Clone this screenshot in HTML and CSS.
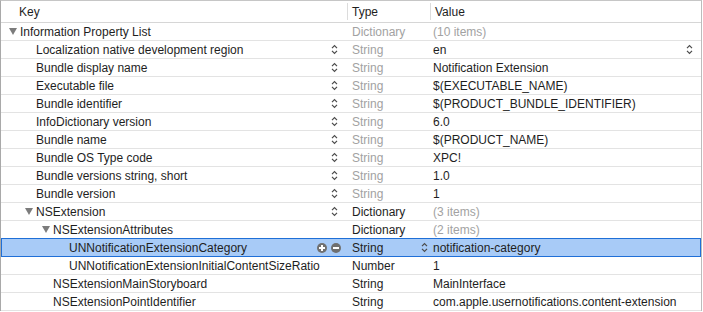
FILE: index.html
```html
<!DOCTYPE html>
<html lang="en">
<head>
    <meta charset="UTF-8">
    <title>Info.plist</title>
    <link rel="stylesheet" href="styles.css">
</head>
<body>

<div class="plist">
    <div class="head">
        <div class="key">Key</div>
        <div class="type">Type</div>
        <div class="value">Value</div>
    </div>

    <div class="row">
        <div class="key lvl0"><span class="tri"></span><span class="label">Information Property List</span></div>
        <div class="type dim">Dictionary</div>
        <div class="value dim">(10 items)</div>
    </div>
    <div class="row">
        <div class="key lvl1"><span class="label">Localization native development region</span><svg class="step" viewBox="0 0 7 11"><path d="M1 4.2L3.5 1.7L6 4.2M1 6.8L3.5 9.3L6 6.8"/></svg></div>
        <div class="type dim">String</div>
        <div class="value"><span class="label">en</span><svg class="step vstep" viewBox="0 0 7 11"><path d="M1 4.2L3.5 1.7L6 4.2M1 6.8L3.5 9.3L6 6.8"/></svg></div>
    </div>
    <div class="row">
        <div class="key lvl1"><span class="label">Bundle display name</span><svg class="step" viewBox="0 0 7 11"><path d="M1 4.2L3.5 1.7L6 4.2M1 6.8L3.5 9.3L6 6.8"/></svg></div>
        <div class="type dim">String</div>
        <div class="value">Notification Extension</div>
    </div>
    <div class="row">
        <div class="key lvl1"><span class="label">Executable file</span><svg class="step" viewBox="0 0 7 11"><path d="M1 4.2L3.5 1.7L6 4.2M1 6.8L3.5 9.3L6 6.8"/></svg></div>
        <div class="type dim">String</div>
        <div class="value">$(EXECUTABLE_NAME)</div>
    </div>
    <div class="row">
        <div class="key lvl1"><span class="label">Bundle identifier</span><svg class="step" viewBox="0 0 7 11"><path d="M1 4.2L3.5 1.7L6 4.2M1 6.8L3.5 9.3L6 6.8"/></svg></div>
        <div class="type dim">String</div>
        <div class="value">$(PRODUCT_BUNDLE_IDENTIFIER)</div>
    </div>
    <div class="row">
        <div class="key lvl1"><span class="label">InfoDictionary version</span><svg class="step" viewBox="0 0 7 11"><path d="M1 4.2L3.5 1.7L6 4.2M1 6.8L3.5 9.3L6 6.8"/></svg></div>
        <div class="type dim">String</div>
        <div class="value">6.0</div>
    </div>
    <div class="row">
        <div class="key lvl1"><span class="label">Bundle name</span><svg class="step" viewBox="0 0 7 11"><path d="M1 4.2L3.5 1.7L6 4.2M1 6.8L3.5 9.3L6 6.8"/></svg></div>
        <div class="type dim">String</div>
        <div class="value">$(PRODUCT_NAME)</div>
    </div>
    <div class="row">
        <div class="key lvl1"><span class="label">Bundle OS Type code</span><svg class="step" viewBox="0 0 7 11"><path d="M1 4.2L3.5 1.7L6 4.2M1 6.8L3.5 9.3L6 6.8"/></svg></div>
        <div class="type dim">String</div>
        <div class="value">XPC!</div>
    </div>
    <div class="row">
        <div class="key lvl1"><span class="label">Bundle versions string, short</span><svg class="step" viewBox="0 0 7 11"><path d="M1 4.2L3.5 1.7L6 4.2M1 6.8L3.5 9.3L6 6.8"/></svg></div>
        <div class="type dim">String</div>
        <div class="value">1.0</div>
    </div>
    <div class="row">
        <div class="key lvl1"><span class="label">Bundle version</span><svg class="step" viewBox="0 0 7 11"><path d="M1 4.2L3.5 1.7L6 4.2M1 6.8L3.5 9.3L6 6.8"/></svg></div>
        <div class="type dim">String</div>
        <div class="value">1</div>
    </div>
    <div class="row">
        <div class="key lvl1"><span class="tri"></span><span class="label">NSExtension</span><svg class="step" viewBox="0 0 7 11"><path d="M1 4.2L3.5 1.7L6 4.2M1 6.8L3.5 9.3L6 6.8"/></svg></div>
        <div class="type">Dictionary</div>
        <div class="value dim">(3 items)</div>
    </div>
    <div class="row">
        <div class="key lvl2"><span class="tri"></span><span class="label">NSExtensionAttributes</span></div>
        <div class="type">Dictionary</div>
        <div class="value dim">(2 items)</div>
    </div>
    <div class="row selected">
        <div class="key lvl3">
            <span class="label">UNNotificationExtensionCategory</span>
            <span class="btns"><span class="circ plus"></span><span class="circ minus"></span></span>
        </div>
        <div class="type"><span class="label">String</span><svg class="step tstep" viewBox="0 0 7 11"><path d="M1 4.2L3.5 1.7L6 4.2M1 6.8L3.5 9.3L6 6.8"/></svg></div>
        <div class="value">notification-category</div>
    </div>
    <div class="row">
        <div class="key lvl3"><span class="label">UNNotificationExtensionInitialContentSizeRatio</span></div>
        <div class="type">Number</div>
        <div class="value">1</div>
    </div>
    <div class="row">
        <div class="key lvl2"><span class="label">NSExtensionMainStoryboard</span></div>
        <div class="type">String</div>
        <div class="value">MainInterface</div>
    </div>
    <div class="row">
        <div class="key lvl2"><span class="label">NSExtensionPointIdentifier</span></div>
        <div class="type">String</div>
        <div class="value">com.apple.usernotifications.content-extension</div>
    </div>
</div>

</body>
</html>
```

FILE: styles.css
```css
body {
    margin: 0;
    font-family: "Liberation Sans", Arial, sans-serif;
    font-size: 12px;
    color: #1e1e1e;
    background: #fff;
}
.plist {
    width: 700px;
    border-top: 1px solid #c6c6c6;
    border-left: 1px solid #a9a9a9;
    border-right: 1px solid #bcbcbc;
}
.head,
.row {
    display: flex;
    align-items: center;
    border-bottom: 1px solid #e3e3e3;
}
.head {
    height: 21px;
    border-bottom-color: #d6d6d6;
}
.row {
    height: 17px;
}
.key {
    width: 346px;
    display: flex;
    align-items: center;
    white-space: nowrap;
}
.type {
    width: 79px;
    padding-left: 5px;
    display: flex;
    align-items: center;
}
.value {
    flex: 1;
    padding-left: 2px;
    display: flex;
    align-items: center;
    white-space: nowrap;
}
.head .key {
    padding-left: 18px;
    width: 328px;
}
.head .type,
.head .value {
    height: 17px;
    border-left: 1px solid #dcdcdc;
    padding-left: 4px;
}
.head .type {
    width: 78px;
}
.lvl0 { padding-left: 19px; width: 327px; }
.lvl1 { padding-left: 35px; width: 311px; }
.lvl2 { padding-left: 52px; width: 294px; }
.lvl3 { padding-left: 68px; width: 278px; }
.label {
    flex: 1;
}
.dim {
    color: #a2a2a2;
}
.tri {
    width: 0;
    height: 0;
    margin-left: -11px;
    margin-right: 3px;
    border-left: 4px solid transparent;
    border-right: 4px solid transparent;
    border-top: 7px solid #7c7c7c;
}
.step {
    width: 7px;
    height: 11px;
    margin-right: 9px;
    fill: none;
    stroke: #4a4a4a;
    stroke-width: 1.2;
}
.tstep {
    margin-right: 3px;
}
.vstep {
    margin-right: 8px;
}
.btns {
    display: flex;
    gap: 4px;
    margin-right: 6px;
}
.circ {
    position: relative;
    width: 10px;
    height: 10px;
    border-radius: 50%;
    background: #6f6f6f;
}
.circ::before,
.circ::after {
    content: "";
    position: absolute;
    background: #fff;
}
.circ::before {
    left: 2px;
    top: 4px;
    width: 6px;
    height: 2px;
}
.plus::after {
    left: 4px;
    top: 2px;
    width: 2px;
    height: 6px;
}
.selected {
    background: #a8cbf7;
    border-bottom-color: #1f6fd7;
    box-shadow: 0 -1px 0 #1f6fd7, inset 1px 0 0 #1f6fd7, inset -1px 0 0 #1f6fd7;
}
```
